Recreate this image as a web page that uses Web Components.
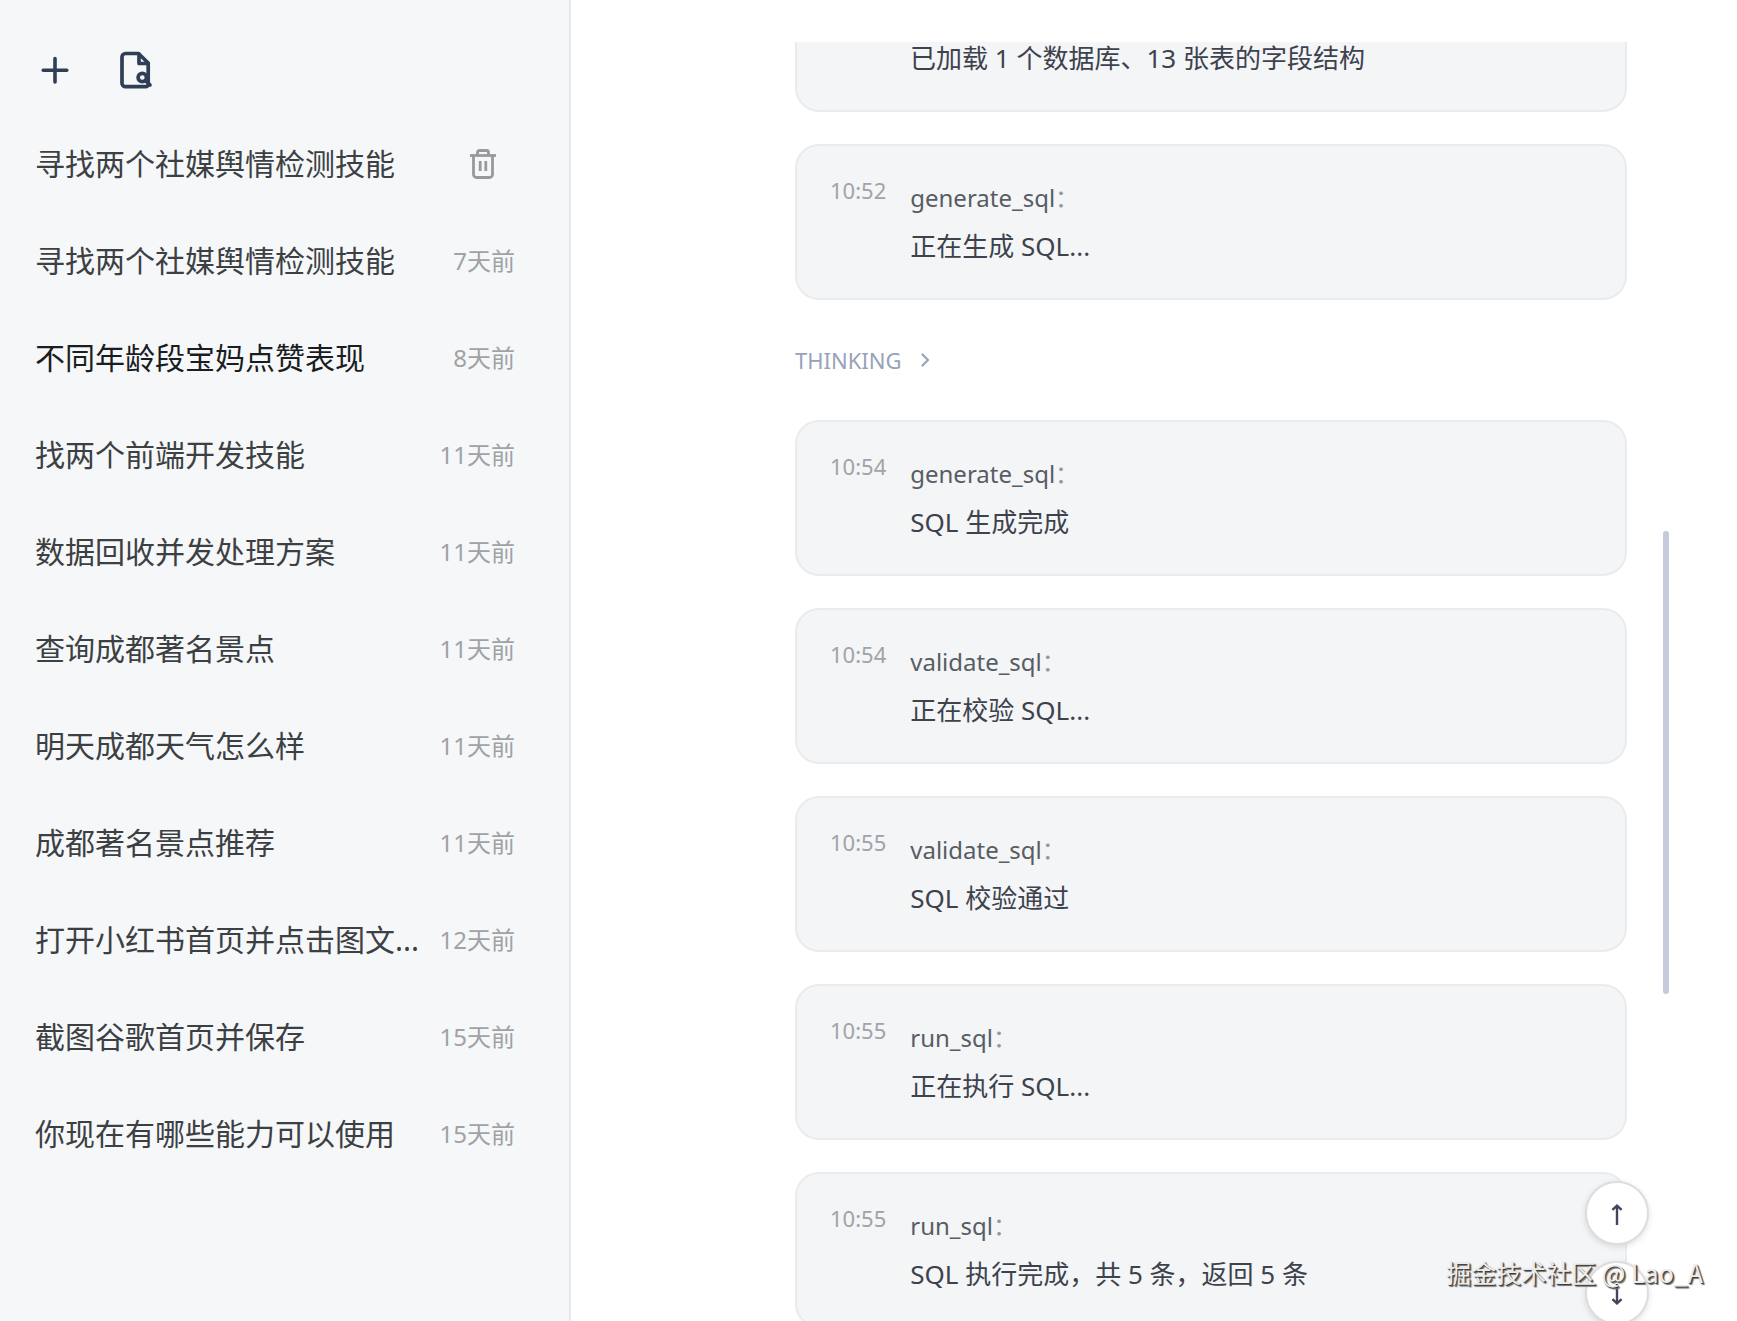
<!DOCTYPE html>
<html lang="zh-CN">
<head>
  <meta charset="utf-8">
  <title>对话</title>
  <style>
    html, body {
      height: 100%;
      margin: 0;
      overflow: hidden;
    }

    body {
      font-family: "Noto Sans", "Noto Sans CJK SC", sans-serif;
      background: #fff;
      color: #3d424c;
    }
  </style>
</head>
<body>
  <chat-app>
    <chat-sidebar slot="sidebar">
      <session-item removable>寻找两个社媒舆情检测技能</session-item>
      <session-item time="7天前">寻找两个社媒舆情检测技能</session-item>
      <session-item time="8天前" active>不同年龄段宝妈点赞表现</session-item>
      <session-item time="11天前">找两个前端开发技能</session-item>
      <session-item time="11天前">数据回收并发处理方案</session-item>
      <session-item time="11天前">查询成都著名景点</session-item>
      <session-item time="11天前">明天成都天气怎么样</session-item>
      <session-item time="11天前">成都著名景点推荐</session-item>
      <session-item time="12天前">打开小红书首页并点击图文...</session-item>
      <session-item time="15天前">截图谷歌首页并保存</session-item>
      <session-item time="15天前">你现在有哪些能力可以使用</session-item>
    </chat-sidebar>

    <message-list>
      <tool-card continued>已加载 1 个数据库、13 张表的字段结构</tool-card>
      <tool-card time="10:52" tool="generate_sql">正在生成 SQL...</tool-card>
      <thinking-toggle>THINKING</thinking-toggle>
      <tool-card time="10:54" tool="generate_sql">SQL 生成完成</tool-card>
      <tool-card time="10:54" tool="validate_sql">正在校验 SQL...</tool-card>
      <tool-card time="10:55" tool="validate_sql">SQL 校验通过</tool-card>
      <tool-card time="10:55" tool="run_sql">正在执行 SQL...</tool-card>
      <tool-card time="10:55" tool="run_sql">SQL 执行完成，共 5 条，返回 5 条</tool-card>
    </message-list>

    <scroll-buttons slot="overlay"></scroll-buttons>
    <water-mark slot="overlay">掘金技术社区 @ Lao_A</water-mark>
  </chat-app>

  <script>
    class ChatApp extends HTMLElement {
      constructor() {
        super()
        this.attachShadow({ mode: "open" })

        this.shadowRoot.innerHTML = `
          <style>
            :host {
              display: flex;
              height: 100vh;
              position: relative;
              overflow: hidden;
            }

            main {
              flex: 1;
              min-width: 0;
              display: flex;
              padding: 42px 68px 0 224px;
            }
          </style>

          <slot name="sidebar"></slot>
          <main><slot></slot></main>
          <slot name="overlay"></slot>
        `
      }
    }

    customElements.define("chat-app", ChatApp)

    class ChatSidebar extends HTMLElement {
      constructor() {
        super()
        this.attachShadow({ mode: "open" })

        this.shadowRoot.innerHTML = `
          <style>
            :host {
              display: block;
              box-sizing: border-box;
              flex: 0 0 571px;
              padding: 46px 54px 0 35px;
              background: #f5f7f9;
              border-right: 2px solid #e5e7eb;
            }

            header {
              display: flex;
              gap: 40px;
              margin-bottom: 21px;
            }

            button {
              width: 40px;
              height: 48px;
              padding: 0;
              border: 0;
              background: none;
              color: #2f3f56;
            }

            svg {
              display: block;
            }
          </style>

          <header>
            <button type="button" aria-label="新建对话">
              <svg width="40" height="48" fill="none" stroke="currentColor" stroke-width="3.6" stroke-linecap="round">
                <path d="M20 12.500v23.500M8.200 24.200h23.600"/>
              </svg>
            </button>
            <button type="button" aria-label="文件检索">
              <svg width="40" height="48" fill="none" stroke="currentColor" stroke-width="3.700" stroke-linecap="round" stroke-linejoin="round">
                <path d="M23.500 7.500H10.500a3.500 3.500 0 0 0-3.500 3.500v26.200a3.500 3.500 0 0 0 3.500 3.500h20.200a2.500 2.500 0 0 0 2.500-2.500V17z"/>
                <path d="M24 8v9.500h9"/>
                <circle cx="27.300" cy="31.500" r="4.200"/>
                <path d="M31 35l4 4"/>
              </svg>
            </button>
          </header>
          <nav><slot></slot></nav>
        `
      }
    }

    customElements.define("chat-sidebar", ChatSidebar)

    class SessionItem extends HTMLElement {
      constructor() {
        super()
        this.attachShadow({ mode: "open" })
      }

      connectedCallback() {
        const side = this.hasAttribute("removable")
          ? `<button type="button" aria-label="删除">
              <svg width="32" height="36" fill="none" stroke="currentColor" stroke-width="2.800" stroke-linejoin="round">
                <path d="M3 9.500h26"/>
                <path d="M10.500 9V6.500a2 2 0 0 1 2-2h7a2 2 0 0 1 2 2V9"/>
                <path d="M6.500 10v18.500a3 3 0 0 0 3 3h13a3 3 0 0 0 3-3V10"/>
                <path d="M13.200 15v10M18.800 15v10"/>
              </svg>
            </button>`
          : `<time>${this.getAttribute("time")}</time>`

        this.shadowRoot.innerHTML = `
          <style>
            :host {
              display: flex;
              align-items: center;
              justify-content: space-between;
              height: 97px;
              color: #3c4043;
            }

            :host([active]) {
              color: #1a1d21;
            }

            a {
              color: inherit;
              font-size: 30px;
              line-height: 44px;
              text-decoration: none;
              white-space: nowrap;
            }

            time {
              color: #a0a2a5;
              font-size: 24px;
              line-height: 44px;
              white-space: nowrap;
            }

            button {
              display: flex;
              justify-content: center;
              width: 64px;
              padding: 0;
              border: 0;
              background: none;
              color: #98999b;
            }
          </style>

          <a href="#"><slot></slot></a>
          ${side}
        `
      }
    }

    customElements.define("session-item", SessionItem)

    class MessageList extends HTMLElement {
      constructor() {
        super()
        this.attachShadow({ mode: "open" })

        this.shadowRoot.innerHTML = `
          <style>
            :host {
              display: flex;
              flex: 1;
              min-width: 0;
              gap: 36px;
            }

            .scroller {
              flex: 1;
              min-width: 0;
              overflow: hidden;
            }

            .items {
              display: flex;
              flex-direction: column;
              gap: 32px;
              margin-top: -8px;
            }

            .track {
              display: grid;
              grid-template-rows: 489fr 463fr 327fr;
              width: 6px;
            }

            .thumb {
              grid-row: 2;
              border-radius: 3px;
              background: #c6cada;
            }
          </style>

          <div class="scroller">
            <div class="items"><slot></slot></div>
          </div>
          <div class="track"><div class="thumb"></div></div>
        `
      }
    }

    customElements.define("message-list", MessageList)

    class ToolCard extends HTMLElement {
      constructor() {
        super()
        this.attachShadow({ mode: "open" })
      }

      connectedCallback() {
        // Una tarjeta "continued" solo muestra el final del mensaje
        const continued = this.hasAttribute("continued")

        this.shadowRoot.innerHTML = `
          <style>
            :host {
              display: flex;
              gap: 24px;
              padding: 28px 33px;
              background: #f3f5f7;
              border: 2px solid #e9ebed;
              border-radius: 24px;
            }

            :host([continued]) {
              padding-top: 0;
              border-top: 0;
              border-radius: 0 0 24px 24px;
            }

            time {
              flex: 0 0 56px;
              color: #a0a3a8;
              font-size: 22px;
              line-height: 32px;
            }

            .body {
              flex: 1;
              min-width: 0;
            }

            .tool {
              color: #585d64;
              font-size: 24px;
              line-height: 48px;
            }

            .colon {
              color: #94989e;
            }

            .text {
              font-size: 26px;
              line-height: 48px;
            }
          </style>

          <time>${this.getAttribute("time") || ""}</time>
          <div class="body">
            ${continued ? "" : `<div class="tool">${this.getAttribute("tool")}<span class="colon">：</span></div>`}
            <div class="text"><slot></slot></div>
          </div>
        `
      }
    }

    customElements.define("tool-card", ToolCard)

    class ThinkingToggle extends HTMLElement {
      constructor() {
        super()
        this.attachShadow({ mode: "open" })

        this.shadowRoot.innerHTML = `
          <style>
            :host {
              display: block;
            }

            button {
              display: flex;
              align-items: center;
              gap: 17px;
              height: 56px;
              padding: 0;
              border: 0;
              background: none;
              color: #98a2b8;
              font: inherit;
              font-size: 22px;
            }
          </style>

          <button type="button" aria-expanded="false">
            <slot></slot>
            <svg width="12" height="16" fill="none" stroke="currentColor" stroke-width="2.200" stroke-linecap="round" stroke-linejoin="round">
              <path d="M3.500 2.500L9 8l-5.500 5.500"/>
            </svg>
          </button>
        `
      }
    }

    customElements.define("thinking-toggle", ThinkingToggle)

    class ScrollButtons extends HTMLElement {
      constructor() {
        super()
        this.attachShadow({ mode: "open" })

        this.shadowRoot.innerHTML = `
          <style>
            :host {
              position: absolute;
              right: 88px;
              bottom: -4px;
              display: flex;
              flex-direction: column;
              gap: 16px;
            }

            button {
              display: flex;
              align-items: center;
              justify-content: center;
              width: 64px;
              height: 64px;
              padding: 0;
              border: 2px solid #dcdde1;
              border-radius: 50%;
              background: #fff;
              box-shadow: 0 2px 6px rgba(0, 0, 0, 0.12);
              color: #41465a;
            }
          </style>

          <button type="button" aria-label="回到顶部">
            <svg width="16" height="24" fill="none" stroke="currentColor" stroke-width="2.400">
              <path d="M8 24V5"/>
              <path d="M3.400 8.800L8 4.600l4.600 4.200"/>
            </svg>
          </button>
          <button type="button" aria-label="回到底部">
            <svg width="16" height="24" fill="none" stroke="currentColor" stroke-width="2.400">
              <path d="M8 3v19"/>
              <path d="M3.400 18.200L8 22.400l4.600-4.200"/>
            </svg>
          </button>
        `
      }
    }

    customElements.define("scroll-buttons", ScrollButtons)

    class WaterMark extends HTMLElement {
      constructor() {
        super()
        this.attachShadow({ mode: "open" })

        this.shadowRoot.innerHTML = `
          <style>
            :host {
              position: absolute;
              right: 34px;
              bottom: 31px;
              color: #ececec;
              font-family: "Noto Sans CJK SC", sans-serif;
              font-size: 25px;
              line-height: 36px;
              text-shadow: 1px 1px 1px #333, 2px 2px 1px #777;
              white-space: nowrap;
              pointer-events: none;
            }
          </style>

          <slot></slot>
        `
      }
    }

    customElements.define("water-mark", WaterMark)
  </script>
</body>
</html>
